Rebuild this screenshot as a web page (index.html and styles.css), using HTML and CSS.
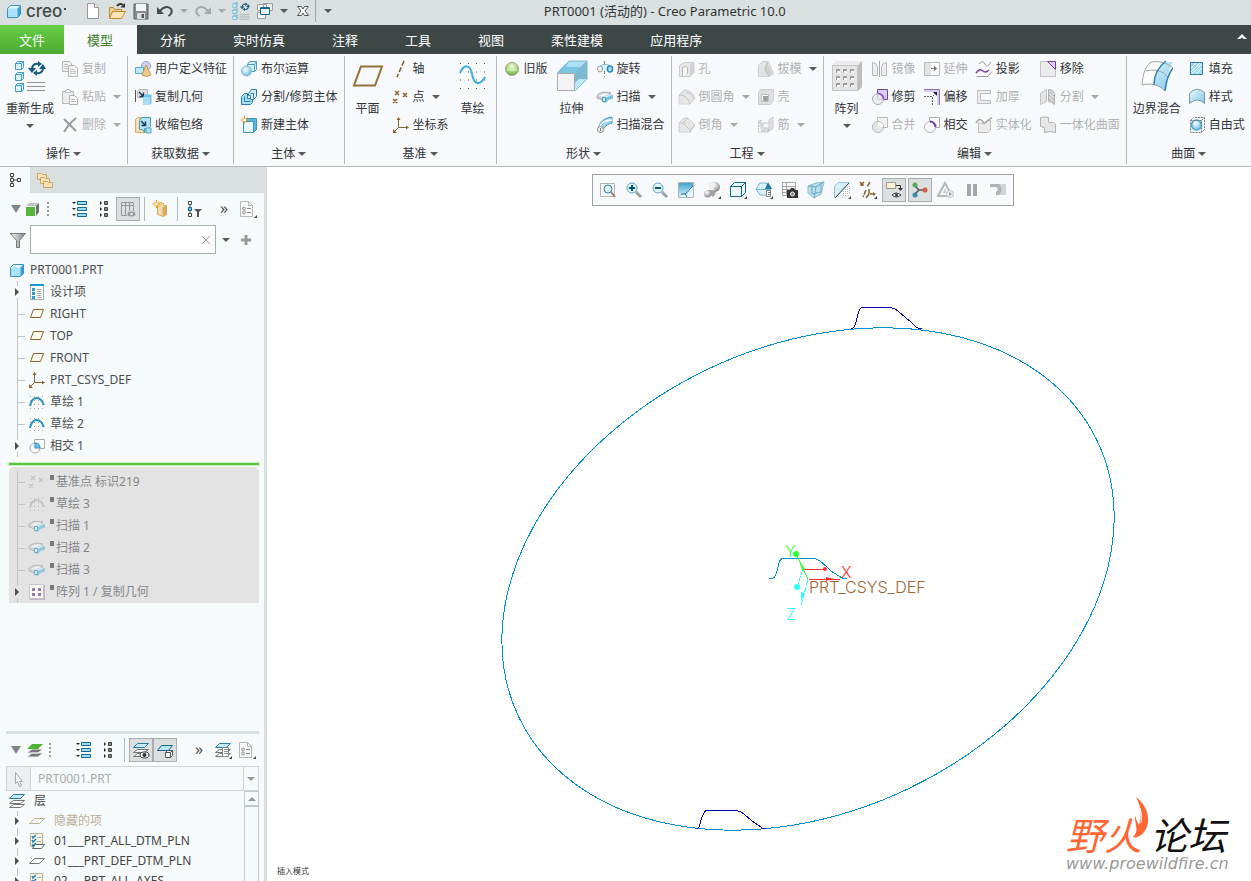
FILE: index.html
```html
<!DOCTYPE html>
<html lang="zh-CN">
<head>
    <meta charset="UTF-8">
    <meta name="viewport" content="width=device-width, initial-scale=1.0">
    <title>PRT0001 (活动的) - Creo Parametric 10.0</title>
    <link rel="stylesheet" href="styles.css">
</head>
<body>
<svg class="sprite" aria-hidden="true">
    <defs>
        <linearGradient id="blue" x1="0" y1="0" x2="1" y2="1"><stop offset="0" stop-color="#f0fbff"/><stop offset="1" stop-color="#7cc8e8"/></linearGradient>
        <linearGradient id="steel" x1="0" y1="0" x2="1" y2="0"><stop offset="0" stop-color="#fff"/><stop offset="1" stop-color="#777"/></linearGradient>
        <linearGradient id="sheet" x1="0" y1="0" x2="0" y2="1"><stop offset="0" stop-color="#3d9fd0"/><stop offset="1" stop-color="#e2f6fd"/></linearGradient>
        <radialGradient id="ball" cx=".4" cy=".35" r=".7"><stop offset="0" stop-color="#fff"/><stop offset="1" stop-color="#5fb8de"/></radialGradient>
        <radialGradient id="greyball" cx=".4" cy=".3" r=".8"><stop offset="0" stop-color="#fff"/><stop offset="1" stop-color="#777"/></radialGradient>
        <radialGradient id="greenball" cx=".5" cy=".3" r=".7"><stop offset="0" stop-color="#f4fbe9"/><stop offset=".6" stop-color="#a5d96e"/><stop offset="1" stop-color="#62a046"/></radialGradient>
    </defs>

    <!-- shared -->
    <symbol id="arrow" viewBox="0 0 8 4"><path d="M0 0h8L4 4z" fill="currentColor"/></symbol>
    <symbol id="cube" viewBox="0 0 18 18"><path d="M2.500 6.500l3-3h10v9l-3 3h-10z" fill="#a9e2fa"/><path d="M2.500 6.500l3-3h10l-3 3z" fill="#e6f8ff"/><path d="M12.500 6.500l3-3v9l-3 3z" fill="#3fa3d0"/><path d="M2.500 6.500l3-3h10v9l-3 3h-10z" fill="none" stroke="#3a94bb"/></symbol>
    <symbol id="newdoc" viewBox="0 0 18 18"><path d="M3.500 1.500h7l4 4v11h-11z" fill="#fff" stroke="#999"/><path d="M10.500 1.500v4h4" fill="#eee" stroke="#999"/></symbol>
    <symbol id="open" viewBox="0 0 18 18"><path d="M1.500 16V5.500h4l1 2h7V9" fill="#f0cf92" stroke="#c08b30"/><path d="M1.500 16.500l3-7h13l-4 7z" fill="#fbe3b4" stroke="#c08b30"/><path d="M9 4c2-2.500 4-2.500 6-1" fill="none" stroke="#333" stroke-width="2"/><path d="M12.500 5.500H17V1z" fill="#333"/></symbol>
    <symbol id="save" viewBox="0 0 18 18"><path d="M2 2h14v15H2z" fill="#858c8f" stroke="#5a6063"/><path d="M4 2h10v7H4z" fill="#f4f4f4"/><path d="M5 11h8v6H5z" fill="#ddd"/><path d="M9.500 12h2.500v4H9.500z" fill="#555"/></symbol>
    <symbol id="undo" viewBox="0 0 18 18"><path d="M4 9c4-5 9-5 11-2 1.500 3 0 5.500-2.500 7" fill="none" stroke="currentColor" stroke-width="2"/><path d="M1 5v7h7z" fill="currentColor"/></symbol>
    <symbol id="redo" viewBox="0 0 18 18"><path d="M14 9c-4-5-9-5-11-2-1.500 3 0 5.500 2.500 7" fill="none" stroke="currentColor" stroke-width="2"/><path d="M17 5v7h-7z" fill="currentColor"/></symbol>
    <symbol id="regen" viewBox="0 0 32 32"><g fill="#dcf5ff" stroke="#3f9cc4"><path d="M1.500 3.500l2-2h6v6l-2 2h-6zM1.500 14.500l2-2h6v6l-2 2h-6zM1.500 25.500l2-2h6v6l-2 2h-6z"/><path d="M1.500 3.500h6v6M7.500 3.500l2-2M1.500 14.500h6v6M7.500 14.500l2-2M1.500 25.500h6v6M7.500 25.500l2-2" fill="none"/></g><path d="M18 9c0-4 3-6 7-5M29 8c0 4-3 6-7 5" fill="none" stroke="#135c80" stroke-width="2"/><path d="M14 8h8l-4 5zM25 9h7l-3-5zM24 1v6l4-3zM23 10v6l-4-3z" fill="#135c80"/><path d="M13 22.500h18M13 26.500h18M13 30.500h18" stroke="#8f9395"/></symbol>
    <symbol id="windows" viewBox="0 0 18 18"><path d="M1.500 2.500h9v6h-9zM7.500 1.500h9v7h-9zM1.500 10.500h8v6h-8z" fill="#f3f5f5" stroke="#9aa0a0"/><path d="M4.500 5.500h9v7h-9z" fill="#e8f8fe" stroke="#17678f"/><path d="M5 6.500h8" stroke="#17678f"/></symbol>
    <symbol id="closewin" viewBox="0 0 18 18"><path d="M3.500 4.500h4L9 7l1.500-2.500h4L11 9l3.500 4.500h-4L9 11l-1.500 2.500h-4L7 9z" fill="#fff" stroke="#555"/></symbol>

    <!-- ribbon, large -->
    <symbol id="plane-l" viewBox="0 0 32 32"><path d="M9 6.500h21l-7 19H2z" fill="none" stroke="#937334" stroke-width="2"/></symbol>
    <symbol id="sketch-l" viewBox="0 0 32 32"><path d="M3 3.500h27M3 12h27M3 20h27M3 28.500h27" stroke="#555" stroke-dasharray="1 7"/><path d="M3 13c4-9 10-9 12 1 2 11 8 12 13 3" fill="none" stroke="#3aade2" stroke-width="2"/></symbol>
    <symbol id="extrude-l" viewBox="0 0 32 32"><path d="M1 13L13 1h18v18L19 31z" fill="#fff"/><path d="M1 13L13 1h18L19 13z" fill="#7cc5e2"/><path d="M13 1h18l-6 6H10z" fill="#aee0f4"/><path d="M19 13L31 1v18L19 31z" fill="#7db9d3"/><path d="M19 23l4-4h8L19 31z" fill="#bfeafc"/><path d="M1 13L13 1h18v18L19 31M31 1L19 13" fill="none" stroke="#7fb9d2"/><path d="M1.500 13.500h17v17h-17z" fill="#f3f3f3" stroke="#aaa"/></symbol>
    <symbol id="pattern-l" viewBox="0 0 32 32"><path d="M1 5l4-4h26l-4 4z" fill="#ececec"/><path d="M27 5l4-4v26l-4 4z" fill="#bdbdbd"/><path d="M1.500 5.500h25v25h-25z" fill="#e4e5e4" stroke="#c3c5c4"/><path d="M5 9h4v4H5zM12 9h4v4h-4zM19 9h4v4h-4zM5 16h4v4H5zM12 16h4v4h-4zM19 16h4v4h-4zM5 23h4v4H5zM12 23h4v4h-4zM19 23h4v4h-4z" fill="#9c9e9d"/><path d="M6 11h3v2H6zM13 11h3v2h-3zM20 11h3v2h-3zM6 18h3v2H6zM13 18h3v2h-3zM20 18h3v2h-3zM6 25h3v2H6zM13 25h3v2h-3zM20 25h3v2h-3z" fill="#f6f6f6"/></symbol>
    <symbol id="blend-l" viewBox="0 0 32 32"><path d="M1 25C2 13 5 4 11 2h21c-5 8-7 18-8 29C18 25 9 23 1 25z" fill="url(#blue)"/><path d="M1 25C2 13 5 4 11 2h14c-5 0-11 12-12 23-5-1-8-1-12 0z" fill="#fdfdfd"/><path d="M1 25C2 13 5 4 11 2c7-1 14 0 21 6M5 11c8-2 16-1 22 6M1 25c8-2 17-1 23 6" fill="none" stroke="#a0a4a7"/><path d="M25 1c-8 6-12 15-12 24M32 8c-5 6-7 14-8 23" fill="none" stroke="#2883ad" stroke-width="1.500"/></symbol>

    <!-- ribbon, small -->
    <symbol id="copy" viewBox="0 0 18 18"><g fill="#f1f1f1" stroke="#b7b9b9"><path d="M1.500 1.500h7l2 2v8h-9z"/><path d="M7.500 5.500h6l3 3v8h-9z"/></g><path d="M3 4.500h4M3 6.500h4M3 8.500h4M9 9.500h4M9 11.500h6M9 13.500h6" stroke="#c3c5c5"/></symbol>
    <symbol id="paste" viewBox="0 0 18 18"><path d="M1.500 3.500h11v12h-11z" fill="#ececec" stroke="#b7b9b9"/><path d="M4.500 4.500v-2h1v-1h3v1h1v2z" fill="#fff" stroke="#b7b9b9"/><path d="M8.500 7.500h5l3 3v6h-8z" fill="#f7f7f7" stroke="#b0b2b2"/><path d="M10 11.500h4M10 13.500h5" stroke="#b7b9b9"/></symbol>
    <symbol id="delete" viewBox="0 0 18 18"><path d="M3 3l12 12M15 2C10 6 6 11 3 16" fill="none" stroke="#989a9b" stroke-width="2"/></symbol>
    <symbol id="udf" viewBox="0 0 18 18"><circle cx="12" cy="6" r="4.500" fill="#cdd4f2" stroke="#8d9bd2"/><path d="M1.500 7.500h8v6h-8z" fill="#bfeafb" stroke="#55a9ca"/><path d="M12 5l5 10q-4 3-9 0z" fill="#efc98b" stroke="#c59a54"/></symbol>
    <symbol id="copygeom" viewBox="0 0 18 18"><path d="M3.500 3.500l2-2h8v8h-10z" fill="#e3e3e3" stroke="#b4b4b4"/><path d="M1.500 2v12" stroke="#555"/><path d="M5 4l4 4M9.500 4.500v4h-4" fill="none" stroke="#173c57" stroke-width="1.500"/><path d="M9.500 8.500l2-2h6v9l-2 1h-6z" fill="#6cc4e9"/><path d="M9 9h7v8H9z" fill="#a7def5"/></symbol>
    <symbol id="shrink" viewBox="0 0 18 18"><path d="M1.500 3.500l2-2h8v15h-10z" fill="#f5deb0" stroke="#cfae6c"/><path d="M5.500 4.500l2-3h9v9l-2 2h-4v4l-2-3h-3z" fill="#b4e4f6" stroke="#4a9cbf"/><path d="M7 5l4 4M11.500 5.500v4h-4" fill="none" stroke="#173c57" stroke-width="1.500"/><path d="M12 12h5v5h-5z" fill="#ade2f7" stroke="#4aa7ce"/></symbol>
    <symbol id="boolean" viewBox="0 0 18 18"><path d="M7.500 4.500l2-3h7v8l-2 2h-7z" fill="#d3f2fc" stroke="#4a9dc0"/><path d="M7.500 4.500h7v7M14.500 4.500l2-3" fill="none" stroke="#4a9dc0"/><circle cx="6.500" cy="11" r="5" fill="url(#ball)" stroke="#8bb9cc"/></symbol>
    <symbol id="split-body" viewBox="0 0 18 18"><path d="M1.500 8.500l3-3h3v5h5v4l-2 2h-9z" fill="#a4dff6" stroke="#2a7ea5"/><path d="M8.500 5.500l3-4h5v7l-3 3h-3v-4h-2z" fill="#d1f2fd" stroke="#2a7ea5"/><path d="M4.500 8.500v5h6M10.500 5.500h3v5" fill="none" stroke="#2a7ea5"/></symbol>
    <symbol id="new-body" viewBox="0 0 18 18"><path d="M3.500 5.500l3-3h10v11l-3 3h-10z" fill="#5cb5da" stroke="#3f94b9"/><path d="M3.500 5.500h10v11h-10z" fill="#eaf9ff" stroke="#3f94b9"/><path d="M4.500 0v8M.5 4h8M2 1.500l5 5M7 1.500l-5 5" stroke="#ee9a20"/><circle cx="4.500" cy="4" r="1.500" fill="#fff"/></symbol>
    <symbol id="axis" viewBox="0 0 18 18"><path d="M12 1L5 17" stroke="#7d5f22" stroke-width="1.500" stroke-dasharray="5 2"/></symbol>
    <symbol id="points" viewBox="0 0 18 18"><path d="M3 3l4 4M7 3L3 7M11 5l4 4M15 5l-4 4M1 11l4 4M5 11l-4 4" stroke="currentColor" stroke-width="1.500"/></symbol>
    <symbol id="csys" viewBox="0 0 18 18"><path d="M6.500 2v9.500H16M6.500 11.500l-5 5" fill="none" stroke="#86662b"/><path d="M4.500 4l2-3 2 3zM14 9.500l3 2-3 2zM1 13v4h4z" fill="#86662b"/></symbol>
    <symbol id="legacy" viewBox="0 0 18 18"><circle cx="9" cy="9" r="6.500" fill="url(#greenball)" stroke="#9aa795"/><path d="M4 10h10" stroke="#dff0cd"/></symbol>
    <symbol id="revolve" viewBox="0 0 18 18"><path d="M8.500 1v16" stroke="#777" stroke-dasharray="3 2"/><path d="M4 6c4-3 8-3 10 0v6c-3-2-7-2-10 0z" fill="#d5edf7"/><path d="M4 6c3-2 7-2 10 0" fill="none" stroke="#8fb5c5"/><ellipse cx="4" cy="9" rx="2.500" ry="3" fill="#f4f4f4" stroke="#999"/><ellipse cx="14" cy="9" rx="2.500" ry="3" fill="#b0e2f7" stroke="#2389b6" stroke-width="1.500"/></symbol>
    <symbol id="sweep" viewBox="0 0 18 18"><path d="M1 8c1-3 6-5 14-3l-3 3-5 1v3L1 10z" fill="#cfcfcf" stroke="#a9a9a9"/><path d="M3 8c2-2 5-3 10-2L7 9z" fill="#f4f4f4"/><path d="M6 9c4-1 6-3 11-2v4c-4 0-5 1-7 4l-4-1z" fill="#79bfdc"/><path d="M6 9c4-1 6-3 11-2-4 1-5 2-7 3z" fill="#cdeefa"/><path d="M6.500 9.500h3v4h-3z" fill="#d2effa" stroke="#4a9cbd"/></symbol>
    <symbol id="sweepblend" viewBox="0 0 18 18"><path d="M2 14C3 6 8 2 16 1v6c-5 1-8 4-10 9z" fill="#9bd5ed" stroke="#4a8fae"/><path d="M3 12C5 6 9 4 16 4" fill="none" stroke="#fff" stroke-width="1.500"/><circle cx="4.500" cy="13.500" r="3" fill="#f5f5f5" stroke="#888"/><path d="M4.500 12v3" stroke="#777"/></symbol>
    <symbol id="hole" viewBox="0 0 18 18"><path d="M1.500 5.500l5-3h9l-3 3v11h-11z" fill="#e7e8e7" stroke="#c9cbca"/><path d="M12.500 5.500l4-3v10l-4 4z" fill="#d2d4d3"/><path d="M4.500 16V8l3-2 2 2v6" fill="#fafafa" stroke="#b3b5b4"/></symbol>
    <symbol id="round" viewBox="0 0 18 18"><path d="M1 7l5-5c6 0 9 3 11 8l-5 6H1z" fill="#e5e6e5" stroke="#d0d2d1"/><path d="M1 7c6 0 9 3 11 9M8 4c5 1 7 4 8 8" fill="none" stroke="#c3c5c4"/></symbol>
    <symbol id="chamfer" viewBox="0 0 18 18"><path d="M1 7l5-5h4l7 7-5 7H1z" fill="#e5e6e5" stroke="#d0d2d1"/><path d="M1 7h4l7 7v3M5 7l5-5M12 14l5-5" fill="none" stroke="#c3c5c4"/></symbol>
    <symbol id="draft" viewBox="0 0 18 18"><path d="M1.500 5.500l4-4h6l5 12-4 3h-11z" fill="#e2e4e3" stroke="#cfd1d0"/><path d="M10 2l5 11-3 3-4-6z" fill="#cfd1d0"/><path d="M10 2L8 10l4 6" fill="none" stroke="#b9bbba"/></symbol>
    <symbol id="shell" viewBox="0 0 18 18"><path d="M1.500 4.500l2-3h13v11l-3 4h-12z" fill="#dfe1e0" stroke="#cbcdcc"/><path d="M4.500 6.500h7v7h-7z" fill="#fff" stroke="#bdbfbe"/><path d="M6 8h5v5H6z" fill="#a1a3a2"/></symbol>
    <symbol id="rib" viewBox="0 0 18 18"><path d="M1 6l3-2v5h8V4l4-3v11l-3 3H4" fill="#dfe1e0" stroke="#c6c8c7"/><path d="M1.500 6v10h10V9" fill="none" stroke="#b9bbba" stroke-dasharray="2 1"/><path d="M6 7h6v5H6z" fill="#f7f7f7" stroke="#c6c8c7"/></symbol>
    <symbol id="mirror" viewBox="0 0 18 18"><path d="M8.500 1v16" stroke="#aaa"/><path d="M1.500 15.500v-13q4 0 5 4v9zM15.500 15.500v-13q-4 0-5 4v9z" fill="#ececec" stroke="#b7b9b8"/></symbol>
    <symbol id="extend" viewBox="0 0 18 18"><path d="M1.500 2.500h15v13h-15z" fill="#fafafa" stroke="#b7b9b8"/><path d="M2 3h6v12H2z" fill="#e3e3e3"/><path d="M8 8.500h5" stroke="#777"/><path d="M11 5.500l3 3-3 3z" fill="#777"/></symbol>
    <symbol id="trim" viewBox="0 0 18 18"><path d="M6.500 1.500h10v10h-10z" fill="#d9ccf5" stroke="#6d46a5"/><circle cx="7" cy="11" r="5.500" fill="#e9eaeb" fill-opacity=".8" stroke="#a8aaab"/><path d="M7 5.500a5.500 5.500 0 0 1 5.500 5.500" fill="none" stroke="#8b45cf" stroke-width="1.500"/></symbol>
    <symbol id="offset" viewBox="0 0 18 18"><path d="M1 1h16v16h-3V4H1z" fill="#d9cdee"/><path d="M1 1.500h15.500V17" fill="none" stroke="#8d6cbb"/><path d="M1 8.500h8.500V17M10 8l3-3" fill="none" stroke="#666" stroke-dasharray="2 1"/><path d="M10 4h4v4z" fill="#222"/></symbol>
    <symbol id="merge" viewBox="0 0 18 18"><path d="M6.500 1.500h10v10h-10z" fill="#f1f1f1" stroke="#b7b9b8"/><circle cx="7" cy="11" r="5.500" fill="#e5e6e5" stroke="#b5b7b6"/><path d="M7 11V6q5 0 5 5z" fill="#fafafa"/></symbol>
    <symbol id="intersect" viewBox="0 0 18 18"><path d="M6.500 1.500h10v10h-10z" fill="#fff" stroke="#a9abac"/><circle cx="7" cy="11" r="5.500" fill="#f8f8f8" stroke="#b2b4b5"/><path d="M7 5.500a5.500 5.500 0 0 1 5.500 5.500" fill="none" stroke="#6a3ba8" stroke-width="2"/></symbol>
    <symbol id="project" viewBox="0 0 18 18"><path d="M4 4c2-3 5-3 6 0s3 3 6-2M2 16.500h11l4-5" fill="none" stroke="#999"/><path d="M1 13c3-4 5-4 7-2s4 1 6-1" fill="none" stroke="#7a44ad" stroke-width="1.500"/></symbol>
    <symbol id="thicken" viewBox="0 0 18 18"><path d="M2.500 2.500h13v3h-10v7h10v3h-13z" fill="#ececec" stroke="#bcbebd"/></symbol>
    <symbol id="solidify" viewBox="0 0 18 18"><path d="M3.500 16.500V7c3-1 4 3 7 0l2-2 3-1v10l-3 2.500z" fill="#ebeceb" stroke="#bcbebd"/><path d="M1 7c3-5 5-4 7-1s5-3 9-4" fill="none" stroke="#a5a7a6" stroke-width="1.500"/></symbol>
    <symbol id="remove" viewBox="0 0 18 18"><path d="M1.500 1.500h15v15h-15z" fill="#ebebeb" stroke="#c3c3c3"/><path d="M8.500 1.500h8v8z" fill="#dac9f6" stroke="#6d46a5"/></symbol>
    <symbol id="splitsurf" viewBox="0 0 18 18"><path d="M1.500 5.500l6-4v12l-6 3z" fill="#e3e4e3" stroke="#c3c5c4"/><path d="M9.500 1.500q5 0 6 4v11q-3-3-6-3z" fill="#d9dad9" stroke="#b0b2b1"/><path d="M11 4l4 4M10 7l5 5M10 11l5 4" stroke="#989a99" stroke-dasharray="1 1"/></symbol>
    <symbol id="unite" viewBox="0 0 18 18"><path d="M1.500 1.500q5-1 8 0v5h5l2 2v8q-5-2-11 0v-5l-4-1z" fill="#e6e7e6" stroke="#b0b2b1"/></symbol>
    <symbol id="fill" viewBox="0 0 18 18"><path d="M2.500 2.500h12v12h-12z" fill="#a5dff7" stroke="#33789a"/><path d="M3 8l5-5M3 12l9-9M4 14L14 4M8 14l6-6" stroke="#effaff"/></symbol>
    <symbol id="style" viewBox="0 0 18 18"><path d="M1.500 5.500q7-8 15-1v11q-7-7-15 0z" fill="url(#blue)" stroke="#7c97a4"/></symbol>
    <symbol id="freestyle" viewBox="0 0 18 18"><circle cx="8.500" cy="9" r="5" fill="url(#ball)" stroke="#4aa8d0" stroke-width="1.500"/><path d="M2.500 4.500h11v12h-11zM2.500 4.500l3-3h11v12l-3 3M13.500 4.500l3-3" fill="none" stroke="#777" stroke-dasharray="2 1"/></symbol>

    <!-- model tree -->
    <symbol id="tab-tree" viewBox="0 0 18 18"><g fill="#fff" stroke="#3c3f41"><path d="M4.500 2.500h3v3h-3zM4.500 7.500h3v3h-3zM4.500 12.500h3v3h-3zM11.500 7.500h3v3h-3z"/><path d="M6 6v1M6 11v1M8 9h3"/></g></symbol>
    <symbol id="tab-folders" viewBox="0 0 18 18"><g fill="#fae4b5" stroke="#c9a662"><path d="M1.500 2.500h4l1 1h4v5h-9z"/><path d="M4.500 6.500h4l1 1h4v5h-9z"/><path d="M7.500 10.500h4l1 1h4v5h-9z"/></g></symbol>
    <symbol id="green-cube" viewBox="0 0 18 18"><path d="M2 6l3-3h10l-3 3z" fill="#c2c2c2"/><path d="M12 6l3-3v9l-3 4z" fill="#6f7375"/><path d="M2 7h9v9H2z" fill="#55b638"/></symbol>
    <symbol id="dots" viewBox="0 0 6 18"><path d="M3 2v14" stroke="#999" stroke-width="2" stroke-dasharray="2 2"/></symbol>
    <symbol id="list" viewBox="0 0 18 18"><g fill="#9bdcf6" stroke="#15648b"><path d="M6.500 1.500h9v3h-9zM6.500 7.500h9v3h-9zM6.500 13.500h9v3h-9z"/></g><path d="M1 2h4L3 4zM1 8h4l-2 2zM1 14h4l-2 2z" fill="#222"/></symbol>
    <symbol id="collapsed" viewBox="0 0 18 18"><g fill="#888" stroke="#444"><path d="M9.500 1.500h3v3h-3zM9.500 7.500h3v3h-3zM9.500 13.500h3v3h-3z"/></g><path d="M5 1v4l2-2zM5 7v4l2-2zM5 13v4l2-2z" fill="#222"/></symbol>
    <symbol id="columns" viewBox="0 0 18 18"><path d="M2.500 2.500h12v13h-12zM2 5.500h13M6.500 3v13M10.500 3v13" fill="none" stroke="#929596"/><ellipse cx="12.500" cy="14" rx="4.500" ry="3" fill="#9b9ea0" stroke="#ddd"/><circle cx="12.500" cy="14" r="1" fill="#fff"/></symbol>
    <symbol id="newfolder" viewBox="0 0 18 18"><path d="M5.500 4.500l3-2 3 1v2h3v9l-3 2-6-2z" fill="#f6dba8" stroke="#d3aa60"/><path d="M10.500 7.500l4-2v9l-4 2z" fill="#d6ab5c"/><path d="M4.500 0v8M.5 4h8M2 1.500l5 5M7 1.500l-5 5" stroke="#f39a16"/><circle cx="4.500" cy="4" r="1.500" fill="#fff3c0"/></symbol>
    <symbol id="treefilter" viewBox="0 0 18 18"><path d="M3.500 1.500h3v3h-3zM3.500 13.500h3v3h-3zM5 5v2M5 11v2" fill="#fff" stroke="#444"/><path d="M3.500 7.500h3v3h-3z" fill="#67c5ee" stroke="#15648b"/><path d="M9 9h8l-3 3v5h-2v-5z" fill="#555"/></symbol>
    <symbol id="settings-doc" viewBox="0 0 18 18"><path d="M1.500 1.500h8l4 4v11h-12z" fill="#fafafa" stroke="#b5b8ba"/><path d="M9.500 1.500v4h4" fill="none" stroke="#b5b8ba"/><path d="M8 8.500h4M8 12.500h4" stroke="#888"/><circle cx="5" cy="8.500" r="1.500" fill="#ddd" stroke="#999"/><circle cx="5" cy="12.500" r="1.500" fill="#ddd" stroke="#999"/><path d="M18 15v3h-3z" fill="#444"/></symbol>
    <symbol id="funnel" viewBox="0 0 18 18"><path d="M1.500 2.500h15l-6 7v7h-3v-7z" fill="url(#steel)" stroke="#75797b"/></symbol>
    <symbol id="design-items" viewBox="0 0 18 18"><path d="M2.500 2.500h13v14h-13z" fill="#fff" stroke="#aaa"/><path d="M2 2h14" stroke="#1897cf" stroke-width="2"/><path d="M4 5h3v3H4zM4 9h3v3H4zM4 13h3v3H4z" fill="#2a9fd2"/><path d="M9 6.500h5M9 8.500h4M9 10.500h5M9 12.500h4M9 14.500h5" stroke="#aaa"/></symbol>
    <symbol id="plane" viewBox="0 0 18 18"><path d="M5.500 4.500h10l-3 8h-10z" fill="#fcfaf0" stroke="currentColor"/></symbol>
    <symbol id="flat-plane" viewBox="0 0 18 18"><path d="M6.500 6.500h10l-5 5h-10z" fill="#fcfcf8" stroke="currentColor"/></symbol>
    <symbol id="sketch" viewBox="0 0 18 18"><path d="M2 3.500h15M2 7.500h15M2 11.500h15M2 15.500h15" stroke="#aaa" stroke-dasharray="1 3"/><path d="M2 13C4 3 12 2 16 12" fill="none" stroke="currentColor" stroke-width="2"/></symbol>
    <symbol id="intersect-blue" viewBox="0 0 18 18"><path d="M6.500 2.500h10v9h-10z" fill="#fff" stroke="#aaa"/><circle cx="7" cy="11" r="5" fill="#fafafa" stroke="#aaa"/><path d="M7 11V6q5 0 5 5z" fill="#6cc5ea" stroke="#2a91bd"/></symbol>
    <symbol id="pattern" viewBox="0 0 18 18"><path d="M2 2h15v15H2z" fill="#b99fc9"/><path d="M1.500 1.500h14v14h-14z" fill="#fcfcfc" stroke="#bbb"/><path d="M4 5h3v3H4zM10 5h3v3h-3zM4 10h3v3H4zM10 10h3v3h-3z" fill="#7d5a96"/></symbol>

    <!-- layer tree -->
    <symbol id="green-layers" viewBox="0 0 18 18"><path d="M1 16l5-4h11l-5 4zM1 12l5-4h11l-5 4z" fill="#777" stroke="#eee"/><path d="M1 8l5-5h11l-5 5z" fill="#50b333"/></symbol>
    <symbol id="layers" viewBox="0 0 18 18"><g fill="#fff" stroke="#777"><path d="M1.500 15.500l4-3h11l-4 3zM1.500 11.500l4-3h11l-4 3z"/></g><path d="M1.500 6.500l4-4h11l-4 4z" fill="#c3eafa" stroke="#2c7ba0"/></symbol>
    <symbol id="layers-eye" viewBox="0 0 18 18"><use href="#layers"/><ellipse cx="12.500" cy="14" rx="4.500" ry="3" fill="#fff" stroke="#333"/><circle cx="12.500" cy="14" r="2" fill="#333"/></symbol>
    <symbol id="layer-cube" viewBox="0 0 18 18"><path d="M1.500 9.500l4-5h11l-4 5z" fill="#b6e7fa" stroke="#17678f"/><path d="M9.500 11.500h5v5h-5zM9.500 11.500l2-2h5v5l-2 2M14.500 11.500l2-2" fill="#f4f4f4" stroke="#555"/></symbol>
    <symbol id="layer-doc" viewBox="0 0 18 18"><use href="#layers"/><path d="M8.500 6.500h6v9h-6z" fill="#fff" stroke="#888"/><path d="M10 8.500h4M10 10.500h4M10 12.500h4" stroke="#999"/><path d="M18 15v3h-3z" fill="#444"/></symbol>
    <symbol id="cursor" viewBox="0 0 18 18"><path d="M5.500 2.500v11l2-2 2 5 2-1-2-4h3z" fill="#f7f7f7" stroke="#a4a7a8"/></symbol>
    <symbol id="rule-layer" viewBox="0 0 18 18"><path d="M2.500 1.500h12v13h-12z" fill="#fcf7e9" stroke="#b9b09a"/><path d="M4 4l1 2 3-3M4 8l1 2 3-3M4 12l1 2 3-3" fill="none" stroke="#1683b8" stroke-width="1.500"/><path d="M9 5.500h4M9 9.500h4" stroke="#aaa"/><path d="M4.500 16.500l3-4h9l-3 4z" fill="#fff" stroke="#666"/></symbol>

    <!-- graphics toolbar -->
    <symbol id="refit" viewBox="0 0 18 18"><path d="M1.500 2.500h14v13h-14z" fill="#fafafa" stroke="#b2b5b6"/><path d="M12 11l4 5" stroke="#9b7a66" stroke-width="2"/><circle cx="9" cy="8" r="4" fill="#dff5fd" stroke="#2687b1"/></symbol>
    <symbol id="zoomin" viewBox="0 0 18 18"><path d="M11 11l5 5" stroke="#9da2a5" stroke-width="3"/><circle cx="7" cy="7" r="5" fill="#e2f7ff" stroke="#5ba1bf"/><path d="M4 7h6M7 4v6" stroke="#0c5579" stroke-width="2"/></symbol>
    <symbol id="zoomout" viewBox="0 0 18 18"><path d="M11 11l5 5" stroke="#9da2a5" stroke-width="3"/><circle cx="7" cy="7" r="5" fill="#e2f7ff" stroke="#5ba1bf"/><path d="M4 7h6" stroke="#0c5579" stroke-width="2"/></symbol>
    <symbol id="repaint" viewBox="0 0 18 18"><path d="M1.500 1.500h15v15h-15z" fill="url(#sheet)" stroke="#b2b5b6"/><path d="M4 16q1-3 5-4 3-5 7-7v11z" fill="#fff" opacity=".7"/><path d="M4 13h4c3-1 4-5 8-8M8 13l2 3" fill="none" stroke="#176d96"/></symbol>
    <symbol id="shade" viewBox="0 0 18 18"><circle cx="12" cy="6" r="5" fill="url(#greyball)"/><path d="M6 2h5v9H6z" fill="#eee"/><path d="M4 9h6l3 3-3 4-4-3z" fill="#a1a3a4"/><circle cx="4.500" cy="13" r="3.500" fill="url(#greyball)"/><path d="M18 15v3h-3z" fill="#444"/></symbol>
    <symbol id="display" viewBox="0 0 18 18"><path d="M1.500 5.500l4-4h11v10l-4 4h-11z" fill="#ecf9fe" stroke="#15648b"/><path d="M1.500 5.500h11v10M12.500 5.500l4-4" fill="none" stroke="#15648b"/><path d="M18 15v3h-3z" fill="#444"/></symbol>
    <symbol id="orient" viewBox="0 0 18 18"><path d="M1 8l4-6h6l5 6-4 6H5z" fill="#daf2fb" stroke="#6fb5cf"/><path d="M13 1l4 7H10z" fill="#237ca6"/><path d="M1 8.500h15" stroke="#6fb5cf"/><path d="M11.500 9.500h4v6h-4z" fill="#fff" stroke="#888"/><path d="M13 11.500h2M13 13.500h2" stroke="#777"/><path d="M18 15v3h-3z" fill="#444"/></symbol>
    <symbol id="viewmgr" viewBox="0 0 18 18"><path d="M1.500 1.500h13v13h-13zM1 5.500h14M1 8.500h14M1 11.500h14M5.500 1v13" fill="#fafafa" stroke="#a5a8aa"/><path d="M6 9h3l1-2h3l1 2h3v8H6z" fill="#333"/><circle cx="11.500" cy="13" r="2" fill="#888" stroke="#eee"/></symbol>
    <symbol id="persp" viewBox="0 0 18 18"><path d="M1 5l8-3 8-1-3 12-7 4-6-5z" fill="#b8e0ef" stroke="#8bbdd1"/><path d="M1 5l8 1 8-5M9 6l-2 11M5 4v9l9-2V2" fill="none" stroke="#6da8c1"/></symbol>
    <symbol id="section" viewBox="0 0 18 18"><path d="M1.500 5.500l4-4h11l-14 15h-1z" fill="#d5f0fb" stroke="#8fc3d8"/><path d="M2 17L16 2" stroke="#444"/><path d="M16.500 5v8l-3 3H5M12.500 8v8M14.500 6v8M10.500 10v6" fill="none" stroke="#bbb" stroke-dasharray="1 1"/><path d="M18 15v3h-3z" fill="#444"/></symbol>
    <symbol id="datum" viewBox="0 0 18 18"><path d="M1 1l4 4M5 1L1 5M11 1L8 6M7 9l-3 7M10 8v5h6M10 13l-3 4" fill="none" stroke="#85652a" stroke-width="1.500" stroke-dasharray="5 1"/><path d="M14 11l3 2-3 2z" fill="#85652a"/><path d="M18 15v3h-3z" fill="#444"/></symbol>
    <symbol id="annotation" viewBox="0 0 18 18"><path d="M1.500 1.500h9v6h-9z" fill="#fcf2cf" stroke="#999"/><path d="M11 4.500h4.500V8" fill="none" stroke="#333"/><path d="M13 7h5l-2.500 3z" fill="#333"/><path d="M7 14q4-4 9 0-5 4-9 0z" fill="#fff" stroke="#333"/><circle cx="11.500" cy="14" r="1.500" fill="#333"/></symbol>
    <symbol id="spin" viewBox="0 0 18 18"><path d="M3 4l5 5-5 5M8 9h6" fill="none" stroke="#555" stroke-width="1.500"/><circle cx="4" cy="4" r="2.500" fill="#5aab5b"/><circle cx="4" cy="14" r="2.500" fill="#3b87b4"/><circle cx="14" cy="9" r="2.500" fill="#d65b4f"/></symbol>
    <symbol id="sim" viewBox="0 0 18 18"><path d="M8 2l7 13H1z" fill="none" stroke="#b5b7b8" stroke-width="2"/><path d="M8 7l2 5H6z" fill="#ccc"/><circle cx="13" cy="13" r="3.500" fill="#eee" stroke="#c5c7c8"/><path d="M12 11v4l3-2z" fill="#999"/></symbol>
    <symbol id="pause" viewBox="0 0 18 18"><path d="M4 3h4v12H4zM10 3h4v12h-4z" fill="#a4a7a9"/></symbol>
    <symbol id="stop" viewBox="0 0 18 18"><path d="M1 3h16v11H7v-3q4-3 0-5H1z" fill="#d0d2d3"/><path d="M1 3h9q5 5 0 11H7v-3q4-3 0-5H1z" fill="#b0b3b4"/></symbol>
</svg>

<header class="titlebar">
    <div class="brand">
        <svg class="icon"><use href="#cube"/></svg>
        <span>creo</span><i></i>
    </div>
    <div class="quick">
        <button><svg class="icon"><use href="#newdoc"/></svg></button>
        <button><svg class="icon"><use href="#open"/></svg></button>
        <button><svg class="icon"><use href="#save"/></svg></button>
        <button><svg class="icon"><use href="#undo"/></svg></button>
        <button class="off"><svg class="arrow"><use href="#arrow"/></svg></button>
        <button class="off"><svg class="icon"><use href="#redo"/></svg></button>
        <button class="off"><svg class="arrow"><use href="#arrow"/></svg></button>
        <button><svg class="icon"><use href="#regen"/></svg></button>
        <button><svg class="icon"><use href="#windows"/></svg></button>
        <button><svg class="arrow"><use href="#arrow"/></svg></button>
        <button><svg class="icon"><use href="#closewin"/></svg></button>
    </div>
    <button class="quick-more"><svg class="arrow"><use href="#arrow"/></svg></button>
    <div class="window-title">PRT0001 (活动的) - Creo Parametric 10.0</div>
</header>

<nav class="tabs">
    <button class="file">文件</button>
    <button class="active">模型</button>
    <button>分析</button>
    <button>实时仿真</button>
    <button>注释</button>
    <button>工具</button>
    <button>视图</button>
    <button>柔性建模</button>
    <button>应用程序</button>
    <button class="minimize"><svg width="12" height="7" viewBox="0 0 12 7"><path d="M1 6l5-5 5 5H8L6 4.500 4 6z" fill="#fff"/></svg></button>
</nav>

<div class="ribbon">
    <section class="group">
        <div class="tools">
            <button class="big"><svg><use href="#regen"/></svg>重新生成<svg class="arrow"><use href="#arrow"/></svg></button>
            <div class="col">
                <button class="off"><svg class="icon"><use href="#copy"/></svg>复制</button>
                <button class="off"><svg class="icon"><use href="#paste"/></svg>粘贴<svg class="arrow"><use href="#arrow"/></svg></button>
                <button class="off"><svg class="icon"><use href="#delete"/></svg>删除<svg class="arrow"><use href="#arrow"/></svg></button>
            </div>
        </div>
        <button class="group-label">操作<svg class="arrow"><use href="#arrow"/></svg></button>
    </section>
    <section class="group">
        <div class="tools">
            <div class="col">
                <button><svg class="icon"><use href="#udf"/></svg>用户定义特征</button>
                <button><svg class="icon"><use href="#copygeom"/></svg>复制几何</button>
                <button><svg class="icon"><use href="#shrink"/></svg>收缩包络</button>
            </div>
        </div>
        <button class="group-label">获取数据<svg class="arrow"><use href="#arrow"/></svg></button>
    </section>
    <section class="group">
        <div class="tools">
            <div class="col">
                <button><svg class="icon"><use href="#boolean"/></svg>布尔运算</button>
                <button><svg class="icon"><use href="#split-body"/></svg>分割/修剪主体</button>
                <button><svg class="icon"><use href="#new-body"/></svg>新建主体</button>
            </div>
        </div>
        <button class="group-label">主体<svg class="arrow"><use href="#arrow"/></svg></button>
    </section>
    <section class="group">
        <div class="tools">
            <button class="big"><svg><use href="#plane-l"/></svg>平面</button>
            <div class="col brown">
                <button><svg class="icon"><use href="#axis"/></svg>轴</button>
                <button><svg class="icon"><use href="#points"/></svg>点<svg class="arrow"><use href="#arrow"/></svg></button>
                <button><svg class="icon"><use href="#csys"/></svg>坐标系</button>
            </div>
            <button class="big"><svg><use href="#sketch-l"/></svg>草绘</button>
        </div>
        <button class="group-label">基准<svg class="arrow"><use href="#arrow"/></svg></button>
    </section>
    <section class="group">
        <div class="tools">
            <div class="col">
                <button><svg class="icon"><use href="#legacy"/></svg>旧版</button>
            </div>
            <button class="big"><svg><use href="#extrude-l"/></svg>拉伸</button>
            <div class="col">
                <button><svg class="icon"><use href="#revolve"/></svg>旋转</button>
                <button><svg class="icon"><use href="#sweep"/></svg>扫描<svg class="arrow"><use href="#arrow"/></svg></button>
                <button><svg class="icon"><use href="#sweepblend"/></svg>扫描混合</button>
            </div>
        </div>
        <button class="group-label">形状<svg class="arrow"><use href="#arrow"/></svg></button>
    </section>
    <section class="group">
        <div class="tools">
            <div class="col">
                <button class="off"><svg class="icon"><use href="#hole"/></svg>孔</button>
                <button class="off"><svg class="icon"><use href="#round"/></svg>倒圆角<svg class="arrow"><use href="#arrow"/></svg></button>
                <button class="off"><svg class="icon"><use href="#chamfer"/></svg>倒角<svg class="arrow"><use href="#arrow"/></svg></button>
            </div>
            <div class="col">
                <button class="off"><svg class="icon"><use href="#draft"/></svg>拔模<svg class="arrow dark"><use href="#arrow"/></svg></button>
                <button class="off"><svg class="icon"><use href="#shell"/></svg>壳</button>
                <button class="off"><svg class="icon"><use href="#rib"/></svg>筋<svg class="arrow"><use href="#arrow"/></svg></button>
            </div>
        </div>
        <button class="group-label">工程<svg class="arrow"><use href="#arrow"/></svg></button>
    </section>
    <section class="group">
        <div class="tools">
            <button class="big"><svg><use href="#pattern-l"/></svg>阵列<svg class="arrow"><use href="#arrow"/></svg></button>
            <div class="col">
                <button class="off"><svg class="icon"><use href="#mirror"/></svg>镜像</button>
                <button><svg class="icon"><use href="#trim"/></svg>修剪</button>
                <button class="off"><svg class="icon"><use href="#merge"/></svg>合并</button>
            </div>
            <div class="col">
                <button class="off"><svg class="icon"><use href="#extend"/></svg>延伸</button>
                <button><svg class="icon"><use href="#offset"/></svg>偏移</button>
                <button><svg class="icon"><use href="#intersect"/></svg>相交</button>
            </div>
            <div class="col">
                <button><svg class="icon"><use href="#project"/></svg>投影</button>
                <button class="off"><svg class="icon"><use href="#thicken"/></svg>加厚</button>
                <button class="off"><svg class="icon"><use href="#solidify"/></svg>实体化</button>
            </div>
            <div class="col">
                <button><svg class="icon"><use href="#remove"/></svg>移除</button>
                <button class="off"><svg class="icon"><use href="#splitsurf"/></svg>分割<svg class="arrow"><use href="#arrow"/></svg></button>
                <button class="off"><svg class="icon"><use href="#unite"/></svg>一体化曲面</button>
            </div>
        </div>
        <button class="group-label">编辑<svg class="arrow"><use href="#arrow"/></svg></button>
    </section>
    <section class="group">
        <div class="tools">
            <button class="big"><svg><use href="#blend-l"/></svg>边界混合</button>
            <div class="col">
                <button><svg class="icon"><use href="#fill"/></svg>填充</button>
                <button><svg class="icon"><use href="#style"/></svg>样式</button>
                <button><svg class="icon"><use href="#freestyle"/></svg>自由式</button>
            </div>
        </div>
        <button class="group-label">曲面<svg class="arrow"><use href="#arrow"/></svg></button>
    </section>
</div>

<div class="workspace">
    <aside class="navigator">
        <div class="nav-tabs">
            <button class="active"><svg class="icon"><use href="#tab-tree"/></svg></button>
            <button><svg class="icon"><use href="#tab-folders"/></svg></button>
        </div>

        <div class="tree-panel">
            <div class="panel-bar">
                <button class="menu"><svg class="fold" viewBox="0 0 10 8"><path d="M0 0h10L5 8z"/></svg><svg class="icon"><use href="#green-cube"/></svg></button>
                <svg class="grip"><use href="#dots"/></svg>
                <button class="tool"><svg class="icon"><use href="#list"/></svg></button>
                <button class="tool"><svg class="icon"><use href="#collapsed"/></svg></button>
                <button class="tool pressed"><svg class="icon"><use href="#columns"/></svg></button>
                <span class="sep"></span>
                <button class="tool"><svg class="icon"><use href="#newfolder"/></svg></button>
                <span class="sep"></span>
                <button class="tool"><svg class="icon"><use href="#treefilter"/></svg></button>
                <button class="tool more">»</button>
                <button class="tool"><svg class="icon"><use href="#settings-doc"/></svg></button>
            </div>
            <div class="search">
                <svg class="icon"><use href="#funnel"/></svg>
                <div class="search-box">
                    <input type="text" aria-label="过滤">
                    <button><svg width="10" height="10" viewBox="0 0 10 10"><path d="M1 1l8 8M9 1L1 9" stroke="#999"/></svg></button>
                </div>
                <button><svg class="arrow"><use href="#arrow"/></svg></button>
                <button><svg width="12" height="12" viewBox="0 0 12 12"><path d="M6 1v10M1 6h10" stroke="#999" stroke-width="3"/></svg></button>
            </div>
            <ul class="tree">
                <li class="root"><svg class="icon"><use href="#cube"/></svg>PRT0001.PRT</li>
                <li><span class="branch expand"></span><svg class="icon"><use href="#design-items"/></svg>设计项</li>
                <li class="brown"><span class="branch"></span><svg class="icon"><use href="#plane"/></svg>RIGHT</li>
                <li class="brown"><span class="branch"></span><svg class="icon"><use href="#plane"/></svg>TOP</li>
                <li class="brown"><span class="branch"></span><svg class="icon"><use href="#plane"/></svg>FRONT</li>
                <li><span class="branch"></span><svg class="icon"><use href="#csys"/></svg>PRT_CSYS_DEF</li>
                <li class="curve"><span class="branch"></span><svg class="icon"><use href="#sketch"/></svg>草绘 1</li>
                <li class="curve"><span class="branch"></span><svg class="icon"><use href="#sketch"/></svg>草绘 2</li>
                <li><span class="branch expand"></span><svg class="icon"><use href="#intersect-blue"/></svg>相交 1</li>
            </ul>
            <div class="insert-line"></div>
            <ul class="tree suppressed">
                <li><span class="branch"></span><svg class="icon"><use href="#points"/></svg><b></b>基准点 标识219</li>
                <li><span class="branch"></span><svg class="icon"><use href="#sketch"/></svg><b></b>草绘 3</li>
                <li><span class="branch"></span><svg class="icon"><use href="#sweep"/></svg><b></b>扫描 1</li>
                <li><span class="branch"></span><svg class="icon"><use href="#sweep"/></svg><b></b>扫描 2</li>
                <li><span class="branch"></span><svg class="icon"><use href="#sweep"/></svg><b></b>扫描 3</li>
                <li><span class="branch expand"></span><svg class="icon"><use href="#pattern"/></svg><b></b>阵列 1 / 复制几何</li>
            </ul>
        </div>

        <div class="layer-panel">
            <div class="panel-bar">
                <button class="menu"><svg class="fold" viewBox="0 0 10 8"><path d="M0 0h10L5 8z"/></svg><svg class="icon"><use href="#green-layers"/></svg></button>
                <svg class="grip"><use href="#dots"/></svg>
                <button class="tool"><svg class="icon"><use href="#list"/></svg></button>
                <button class="tool"><svg class="icon"><use href="#collapsed"/></svg></button>
                <span class="sep"></span>
                <button class="tool pressed"><svg class="icon"><use href="#layers-eye"/></svg></button>
                <button class="tool pressed"><svg class="icon"><use href="#layer-cube"/></svg></button>
                <button class="tool more">»</button>
                <button class="tool"><svg class="icon"><use href="#layer-doc"/></svg></button>
                <button class="tool"><svg class="icon"><use href="#settings-doc"/></svg></button>
            </div>
            <div class="model-pick">
                <button disabled><svg class="icon"><use href="#cursor"/></svg></button>
                <select disabled aria-label="模型"><option>PRT0001.PRT</option></select>
                <span><svg class="arrow"><use href="#arrow"/></svg></span>
            </div>
            <div class="layer-list">
                <ul class="tree">
                    <li class="root"><svg class="icon"><use href="#layers"/></svg>层</li>
                    <li class="hidden-item"><span class="branch expand"></span><svg class="icon"><use href="#flat-plane"/></svg>隐藏的项</li>
                    <li><span class="branch expand"></span><svg class="icon"><use href="#rule-layer"/></svg>01___PRT_ALL_DTM_PLN</li>
                    <li><span class="branch expand"></span><svg class="icon thin"><use href="#flat-plane"/></svg>01___PRT_DEF_DTM_PLN</li>
                    <li><span class="branch expand"></span><svg class="icon"><use href="#rule-layer"/></svg>02___PRT_ALL_AXES</li>
                </ul>
                <div class="scrollbar"><button><svg class="arrow up"><use href="#arrow"/></svg></button></div>
            </div>
        </div>
    </aside>

    <main class="canvas">
        <svg class="model" viewBox="0 0 984 714" preserveAspectRatio="xMinYMin meet">
            <g fill="none" shape-rendering="crispEdges">
                <ellipse cx="541" cy="412" rx="320.500" ry="232.500" transform="rotate(-25.500 541 412)" stroke="#0090d0"/>
                <path d="M584 162C588 161 588 158 590 151S592 140 597 140H620C630 140 634 148 643 154 648 160 651 162 655 162" stroke="#0000b4"/>
                <path d="M430 662C434 662 433 646 440 643H466C476 643 480 651 488 656S495 662 499 662" stroke="#0000b4"/>
                <path d="M502 412C507 412 508 411 510 404S512 391 517 391H544C554 391 560 402 567 406S574 412 580 412" stroke="#0090d0"/>
                <path d="M536 402h22M542 412h31" stroke="#ff3030"/>
                <path d="M529 387l12 25" stroke="#30ff30"/>
                <path d="M536 402l-6 18M541 412l-7 27" stroke="#30ffff" stroke-dasharray="6 1"/>
            </g>
            <circle cx="529" cy="387" r="3" fill="#30ff30"/>
            <path d="M532 393l6 9-3 1z" fill="#30ff30"/>
            <circle cx="558" cy="402" r="2" fill="#ff3030"/>
            <path d="M559 410l8 2-8 2z" fill="#ff3030"/>
            <circle cx="530" cy="420" r="3" fill="#30ffff"/>
            <path d="M534 425l4 1-4 8z" fill="#30ffff"/>
            <g class="csys-label">
                <text x="518" y="390" fill="#30ff30">Y</text>
                <text x="574" y="411" fill="#ff3030">X</text>
                <text x="519" y="453" fill="#30ffff">Z</text>
                <text x="542" y="426" fill="#996633">PRT_CSYS_DEF</text>
            </g>
        </svg>
        <div class="view-bar">
            <button class="tool"><svg class="icon"><use href="#refit"/></svg></button>
            <button class="tool"><svg class="icon"><use href="#zoomin"/></svg></button>
            <button class="tool"><svg class="icon"><use href="#zoomout"/></svg></button>
            <button class="tool"><svg class="icon"><use href="#repaint"/></svg></button>
            <button class="tool"><svg class="icon"><use href="#shade"/></svg></button>
            <button class="tool"><svg class="icon"><use href="#display"/></svg></button>
            <button class="tool"><svg class="icon"><use href="#orient"/></svg></button>
            <button class="tool"><svg class="icon"><use href="#viewmgr"/></svg></button>
            <button class="tool"><svg class="icon"><use href="#persp"/></svg></button>
            <button class="tool"><svg class="icon"><use href="#section"/></svg></button>
            <button class="tool"><svg class="icon"><use href="#datum"/></svg></button>
            <button class="tool pressed"><svg class="icon"><use href="#annotation"/></svg></button>
            <button class="tool pressed"><svg class="icon"><use href="#spin"/></svg></button>
            <button class="tool"><svg class="icon"><use href="#sim"/></svg></button>
            <button class="tool"><svg class="icon"><use href="#pause"/></svg></button>
            <button class="tool"><svg class="icon"><use href="#stop"/></svg></button>
        </div>
        <div class="mode">插入模式</div>
        <div class="watermark">
            <div class="wm-name"><span>野火</span>论坛</div>
            <div class="wm-url">www.proewildfire.cn</div>
            <svg class="flame" viewBox="0 0 18 44"><path d="M4 1C16 10 20 26 12 36Q8 42 1 41C8 34 2 28 3 19 4 23 5 26 7 29 10 20 9 10 4 1z" fill="#ff6633"/><path d="M8 12q3 8 1 15" fill="none" stroke="#fff"/></svg>
        </div>
    </main>
</div>
</body>
</html>
```

FILE: styles.css
```css
:root {
    --chrome: #dae0df;
    --tabbar: #3c4746;
    --panel: #f8f9fc;
    --text: #303437;
    --muted: #b0b2b4;
    --line: #b4babc;
    --brown: #86662b;
}
* {
    box-sizing: border-box;
}
body {
    margin: 0;
    height: 100vh;
    display: flex;
    flex-direction: column;
    overflow: hidden;
    font: 12px/16px "Noto Sans", "Noto Sans CJK SC", sans-serif;
    color: var(--text);
    background: #fff;
}
button {
    margin: 0;
    padding: 0;
    border: 0;
    background: none;
    font: inherit;
    color: inherit;
    white-space: nowrap;
    display: flex;
    align-items: center;
}
ul {
    list-style: none;
    margin: 0;
    padding: 0;
}
svg {
    flex: none;
    display: block;
}
.sprite {
    position: absolute;
    width: 0;
    height: 0;
}
.icon {
    width: 18px;
    height: 18px;
}
.arrow {
    width: 8px;
    height: 4px;
    color: #55595b;
}
.off {
    color: var(--muted);
}
.off .arrow {
    color: #a5a8aa;
}
.off .arrow.dark {
    color: #55595b;
}

/* title bar */
.titlebar {
    flex: none;
    height: 25px;
    display: flex;
    align-items: center;
    padding: 0 0 3px 5px;
    background: var(--chrome);
}
.brand {
    display: flex;
    align-items: center;
    width: 79px;
    font: 500 17px/20px Inter, sans-serif;
    color: #3f4a4a;
}
.brand span {
    margin-left: 3px;
}
.brand i {
    width: 2px;
    height: 2px;
    margin: 0 0 4px 2px;
    background: #3f4a4a;
}
.quick {
    display: flex;
    gap: 6px;
    color: #454b4d;
}
.quick .off {
    color: #a3a9a9;
}
.quick-more {
    height: 22px;
    margin-left: 3px;
    padding-left: 8px;
    border-left: 1px solid #9fa6a6;
}
.window-title {
    flex: 1;
    padding-left: 17%;
    font-size: 13px;
}

/* tabs */
.tabs {
    flex: none;
    height: 29px;
    display: flex;
    background: var(--tabbar);
    color: #fff;
    font-size: 13px;
}
.tabs button {
    padding: 0 24px 0 23px;
}
.tabs .file {
    padding: 0 19px;
    background: linear-gradient(#66cf45, #4ea832);
}
.tabs .active {
    background: var(--panel);
    color: #41802a;
}
.tabs .minimize {
    margin-left: auto;
    padding: 0 3px 6px;
}

/* ribbon */
.ribbon {
    flex: none;
    display: flex;
    padding-top: 1px;
    background: var(--panel);
    border-bottom: 1px solid var(--line);
}
.group {
    flex: none;
    display: flex;
    flex-direction: column;
    padding: 0 6px;
    border-right: 1px solid;
    border-image: linear-gradient(transparent 2px, var(--line) 2px, var(--line) 108px, transparent 108px) 1;
}
.group:last-child {
    border: 0;
}
.tools {
    display: flex;
    gap: 7px;
}
.col button {
    height: 28px;
    gap: 3px;
}
.col .arrow {
    margin-left: 4px;
}
.col.brown .icon {
    color: var(--brown);
}
.big {
    min-width: 34px;
    height: 84px;
    flex-direction: column;
    padding-top: 5px;
}
.big svg:first-child {
    width: 32px;
    height: 32px;
    margin-bottom: 9px;
}
.big .arrow {
    margin-top: 7px;
}
.group-label {
    height: 27px;
    padding-top: 2px;
    align-self: center;
    gap: 3px;
}

/* navigator */
.workspace {
    flex: 1;
    min-height: 0;
    display: flex;
}
.navigator {
    flex: 0 0 267px;
    display: flex;
    flex-direction: column;
    border-right: 3px solid var(--chrome);
    background: #f7fafb;
    color: #4b4e50;
}
.nav-tabs {
    height: 26px;
    display: flex;
    background: var(--chrome);
}
.nav-tabs button {
    padding: 0 6px;
}
.nav-tabs .active {
    width: 30px;
    background: #f7fafb;
}
.tree-panel {
    flex: 1;
    min-height: 0;
}
.panel-bar {
    height: 32px;
    display: flex;
    align-items: center;
    padding-left: 11px;
}
.menu {
    gap: 3px;
}
.fold {
    width: 10px;
    height: 8px;
    fill: #808587;
}
.grip {
    width: 6px;
    height: 18px;
    margin: 0 17px 0 3px;
}
.tool {
    width: 24px;
    height: 24px;
    justify-content: center;
}
.pressed {
    background: #dcdfe0;
    border: 1px solid #a9adaf;
}
.sep {
    width: 1px;
    height: 24px;
    margin: 0 4px;
    background: var(--line);
}
.more {
    margin-left: 6px;
    padding-bottom: 2px;
    font-size: 16px;
}
.search {
    height: 29px;
    display: flex;
    align-items: center;
    gap: 6px;
    padding-left: 9px;
}
.search .icon {
    margin-right: -3px;
}
.search-box {
    width: 186px;
    height: 29px;
    display: flex;
    border: 1px solid #a5afb0;
    background: #fff;
}
.search-box input {
    flex: 1;
    min-width: 0;
    border: 0;
    background: none;
    font: inherit;
}
.search-box button {
    padding-right: 4px;
}
.search > button {
    margin-right: 4px;
}
.tree li {
    height: 22px;
    display: flex;
    align-items: center;
    white-space: nowrap;
}
.tree .icon {
    margin-right: 4px;
}
.tree-panel .tree:not(.suppressed) {
    padding-top: 5px;
}
.tree .root {
    padding-left: 8px;
}
.tree .brown .icon {
    color: var(--brown);
}
.tree .curve .icon {
    color: #2b91bd;
}
.branch {
    width: 28px;
    height: 100%;
    background: linear-gradient(#c2c5c7, #c2c5c7) 17px 0 / 1px 100% no-repeat,
                linear-gradient(#c2c5c7, #c2c5c7) 17px 50% / 8px 1px no-repeat;
}
.branch.expand {
    display: flex;
    align-items: center;
    background: linear-gradient(#c2c5c7 5px, transparent 5px, transparent 17px, #c2c5c7 17px) 17px 0 / 1px 100% no-repeat;
}
.branch.expand::before {
    content: "";
    margin-left: 15px;
    border: 4px solid transparent;
    border-left: 4px solid #4b4e50;
    border-right: 0;
}
.insert-line {
    height: 2px;
    margin: 6px 5px 2px 9px;
    background: #5cc43c;
    outline: 1px solid #cdeec2;
}
.suppressed {
    margin: 0 5px 0 9px;
    padding: 4px 0 0;
    background: #e3e3e3;
    border-radius: 5px 5px 0 0;
    color: #858789;
}
.suppressed .branch {
    width: 27px;
    margin-left: -9px;
    flex: none;
}
.suppressed .icon {
    margin: 0 4px 0 1px;
    color: #bdbdb5;
    opacity: .75;
}
.suppressed b {
    width: 4px;
    height: 5px;
    margin: -9px 2px 0 0;
    background: #77797b;
}

/* layers */
.layer-panel {
    flex: 0 0 150px;
    min-height: 0;
    display: flex;
    flex-direction: column;
    margin: 0 5px 0 6px;
    border-top: 3px solid var(--chrome);
}
.layer-panel .panel-bar {
    flex: none;
    padding-left: 5px;
}
.layer-panel .menu {
    gap: 5px;
}
.layer-panel .grip {
    margin-right: 19px;
}
.layer-panel .more {
    margin-left: 10px;
}
.model-pick {
    flex: none;
    height: 25px;
    display: flex;
    border: 1px solid #cfd3d4;
    color: #aaadaf;
}
.model-pick button {
    width: 24px;
    justify-content: center;
    background: #eceef0;
    border-right: 1px solid #cfd3d4;
}
.model-pick select {
    flex: 1;
    appearance: none;
    padding: 0 7px;
    border: 0;
    background: none;
    font: inherit;
    color: inherit;
    opacity: 1;
}
.model-pick span {
    width: 15px;
    display: grid;
    place-items: center;
    border-left: 1px solid #cfd3d4;
}
.model-pick .arrow {
    color: #999;
}
.layer-list {
    flex: 1;
    min-height: 0;
    display: flex;
    overflow: hidden;
}
.layer-list .tree {
    flex: 1;
}
.layer-list li {
    height: 20px;
    color: #3f4244;
}
.layer-list .root {
    padding-left: 2px;
}
.layer-list .icon {
    margin-right: 8px;
}
.layer-list .branch {
    margin-left: -6px;
}
.layer-list .hidden-item {
    color: #bbb199;
}
.layer-list .thin {
    color: #777;
}
.scrollbar {
    width: 15px;
    border: 1px solid #c3c8ca;
    border-bottom: 0;
}
.scrollbar button {
    width: 100%;
    height: 15px;
    justify-content: center;
    border-bottom: 2px solid #c3c8ca;
}
.scrollbar .arrow {
    color: #999;
}
.up {
    rotate: 180deg;
}

/* graphics area */
.canvas {
    flex: 1;
    position: relative;
    overflow: hidden;
    background: #fff;
}
.model {
    width: 100%;
}
.csys-label {
    font: 300 16px Inter, sans-serif;
}
.view-bar {
    position: absolute;
    top: 7px;
    left: 325px;
    height: 32px;
    display: flex;
    align-items: center;
    gap: 2px;
    padding: 0 3px;
    border: 1px solid #a0a3a6;
    background: var(--panel);
}
.mode {
    position: absolute;
    left: 10px;
    bottom: 2px;
    font-size: 8px;
}
.watermark {
    position: absolute;
    left: 799px;
    bottom: 7px;
}
.wm-name {
    font: italic 400 38px/40px "Noto Sans CJK SC", sans-serif;
    color: #111;
}
.wm-name span {
    margin-right: 8px;
    color: #ff6633;
}
.wm-url {
    font: italic 16px/20px "DejaVu Sans", sans-serif;
    color: #999;
}
.flame {
    position: absolute;
    left: 66px;
    top: -18px;
    width: 18px;
    height: 44px;
}
```
